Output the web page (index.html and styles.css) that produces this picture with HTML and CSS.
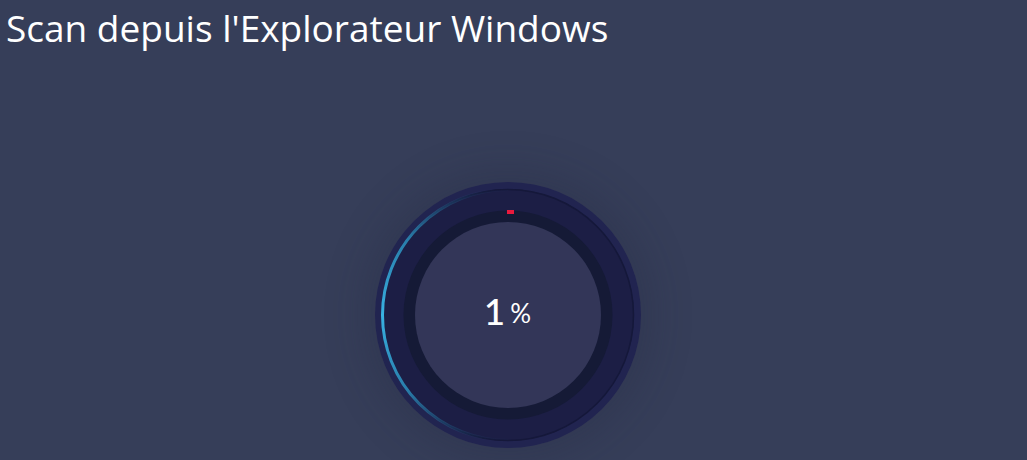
FILE: index.html
```html
<!DOCTYPE html>
<html lang="fr">
<head>
<meta charset="utf-8">
<title>Scan depuis l'Explorateur Windows</title>
<link rel="stylesheet" href="styles.css">
</head>
<body>
<div class="page">
  <h1 class="title">Scan depuis l'Explorateur Windows</h1>
  <div class="stage">
    <div class="dial">
      <svg class="dial-svg" width="266" height="266" viewBox="0 0 266 266">
        <defs>
          <linearGradient id="arcGrad" x1="0" y1="0" x2="0" y2="1">
            <stop offset="0" stop-color="#2f9fcf" stop-opacity="0"/>
            <stop offset="0.2" stop-color="#2f9fcf" stop-opacity="0.75"/>
            <stop offset="0.5" stop-color="#39b3e3"/>
            <stop offset="0.8" stop-color="#2f9fcf" stop-opacity="0.75"/>
            <stop offset="1" stop-color="#2f9fcf" stop-opacity="0"/>
          </linearGradient>
        </defs>
        <circle cx="133" cy="133" r="133" fill="#212450"/>
        <circle cx="133" cy="133" r="126" fill="#1c1e45"/>
        <circle cx="133" cy="133" r="125.5" fill="none" stroke="#15183a" stroke-width="1.5"/>
        <path d="M133 7.5 A125.5 125.5 0 0 0 133 258.5" fill="none" stroke="url(#arcGrad)" stroke-width="3"/>
        <circle cx="133" cy="133" r="104.5" fill="#151a36"/>
        <circle cx="133" cy="133" r="93" fill="#333658"/>
        <rect x="132" y="28" width="7" height="4" fill="#ea1a3d"/>
      </svg>
      <div class="value"><span class="num">1</span><span class="pct">%</span></div>
    </div>
  </div>
</div>
</body>
</html>
```

FILE: styles.css
```css
html, body {
  margin: 0;
  padding: 0;
  background: #363e59;
  height: 100%;
  overflow: hidden;
}
.page {
  font-family: "Open Sans", "Lato", sans-serif;
  color: #ffffff;
}
.title {
  margin: 0;
  padding: 6px 0 0 6px;
  font-size: 37px;
  font-weight: 400;
  line-height: 43px;
}
.stage {
  display: flex;
  justify-content: center;
  padding-top: 133px;
  padding-right: 12px;
}
.dial {
  position: relative;
  width: 266px;
  height: 266px;
  border-radius: 50%;
  box-shadow: 0 0 40px 10px rgba(30, 34, 60, 0.25);
}
.dial-svg {
  display: block;
}
.value {
  position: absolute;
  inset: 0;
  display: flex;
  align-items: center;
  justify-content: center;
  gap: 5px;
  padding-bottom: 10px;
  font-family: "Lato", sans-serif;
}
.num {
  font-size: 37px;
  font-weight: 500;
  line-height: 1;
}
.pct {
  font-size: 26px;
  line-height: 1;
  margin-top: 6px;
}
```
